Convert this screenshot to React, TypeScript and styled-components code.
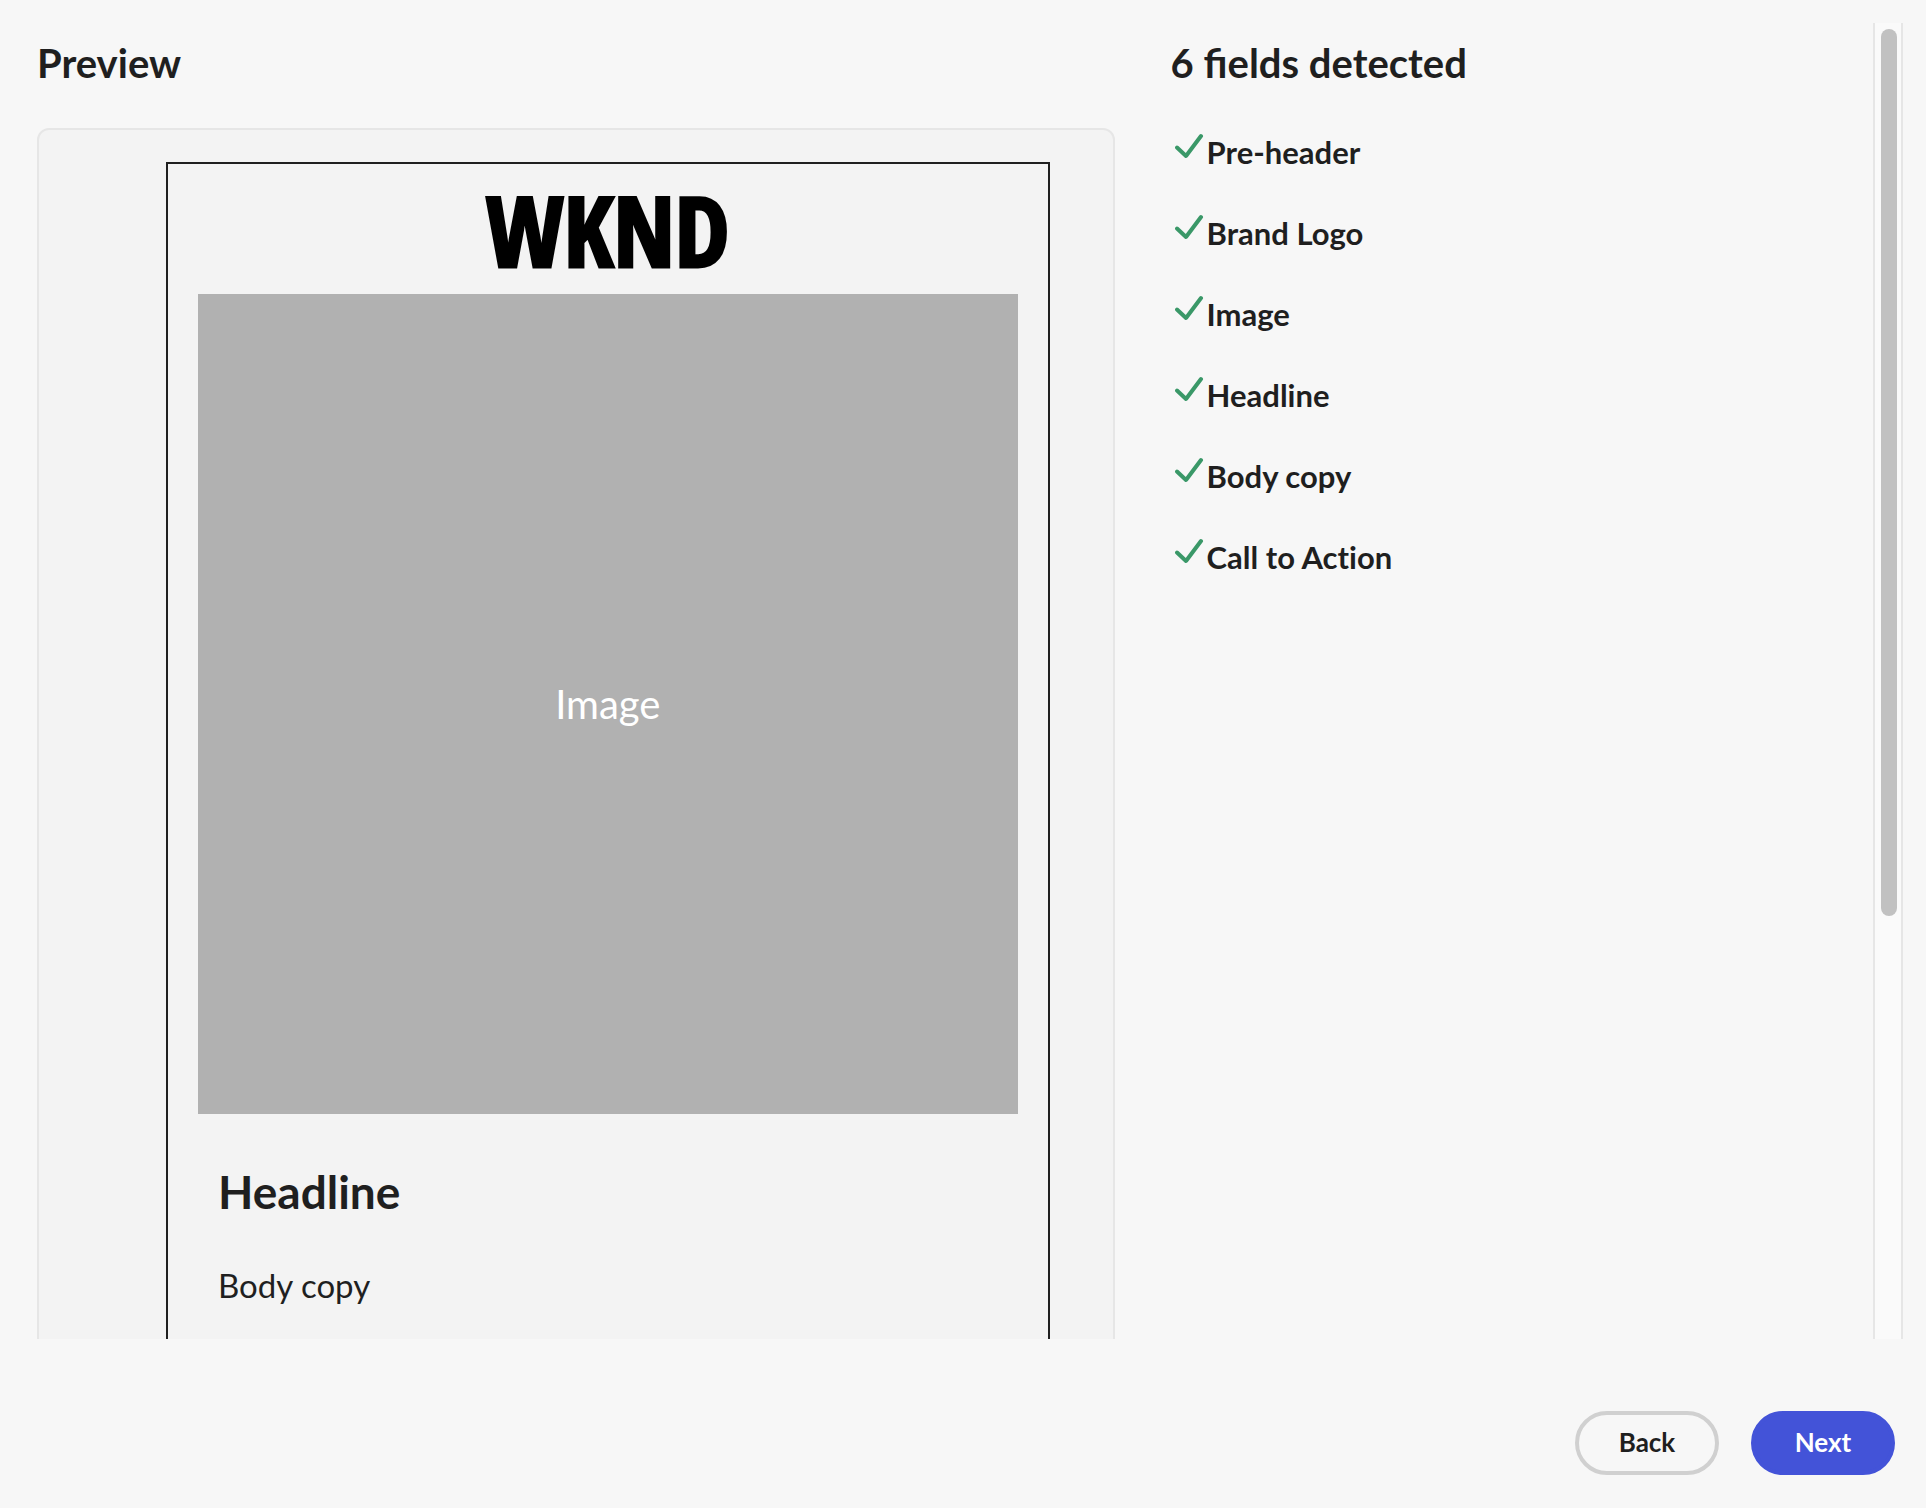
import React from "react";
import styled, { createGlobalStyle } from "styled-components";

const color = {
  page: "#f7f7f7",
  card: "#f3f3f3",
  ink: "#1f1f1f",
  line: "#e6e6e6",
  placeholder: "#b1b1b1",
  positive: "#3a9868",
  accent: "#4353d8",
};

const GlobalStyle = createGlobalStyle`
  *, *::before, *::after { box-sizing: border-box; }
  html, body, #root { height: 100%; }
  body {
    margin: 0;
    background: ${color.page};
    color: ${color.ink};
    font-family: Lato, "Open Sans", sans-serif;
  }
  h1, h2, p, ul { margin: 0; padding: 0; }
`;

const Page = styled.div`
  display: flex;
  flex-direction: column;
  height: 100vh;
  padding-top: 23px;
`;

const ScrollArea = styled.main`
  flex: 1;
  min-height: 0;
  display: flex;
  padding: 0 23px 0 37px;
`;

const Columns = styled.div`
  flex: 1;
  min-width: 0;
  display: grid;
  grid-template-columns: 3fr 2fr;
  column-gap: 40px;
  align-items: start;
  overflow: hidden;
`;

const Column = styled.section<{ $inset?: boolean }>`
  min-width: 0;
  padding-left: ${(p) => (p.$inset ? 16 : 0)}px;
`;

const Title = styled.h1`
  padding: 16px 0 41px;
  font-size: 40px;
  line-height: 48px;
  font-weight: 700;
`;

const Card = styled.div`
  padding: 32px 63px 64px 127px;
  border: 2px solid ${color.line};
  border-radius: 12px;
  background: ${color.card};
`;

const Email = styled.article`
  padding: 0 30px 64px;
  border: 2px solid ${color.ink};
`;

const Logo = styled.div`
  display: flex;
  align-items: center;
  justify-content: center;
  height: 130px;
  color: #000;
  font-family: "Noto Sans ExtraCondensed", "Open Sans Condensed", "Liberation Sans Narrow", "DejaVu Sans Condensed", sans-serif;
  font-size: 98px;
  line-height: 128px;
  font-weight: 900;
  -webkit-text-stroke: 3px #000;
`;

const ImageSlot = styled.div`
  display: flex;
  align-items: center;
  justify-content: center;
  aspect-ratio: 1;
  background: ${color.placeholder};
  color: #fff;
  font-size: 40px;
  line-height: 48px;
`;

const Copy = styled.div`
  padding: 50px 20px 0;
`;

const Headline = styled.h2`
  font-size: 46px;
  line-height: 56px;
  font-weight: 700;
`;

const Body = styled.p`
  padding-top: 45px;
  font-size: 33px;
  line-height: 40px;
`;

const Fields = styled.ul`
  list-style: none;
`;

const Field = styled.li`
  display: flex;
  align-items: flex-start;
  gap: 2px;
  height: 81px;
  padding-left: 4px;
  font-size: 31px;
  line-height: 48px;
  font-weight: 700;
  font-variant-ligatures: none;
`;

const CheckIcon = styled.svg`
  flex: none;
  width: 30px;
  height: 48px;
`;

const Track = styled.div`
  flex: none;
  width: 30px;
  padding: 6px;
  border: solid ${color.line};
  border-width: 0 2px;
  background: #fafafa;
`;

const Thumb = styled.div`
  width: 16px;
  height: 68%;
  border-radius: 8px;
  background: #c1c1c1;
`;

const Footer = styled.footer`
  display: flex;
  justify-content: flex-end;
  gap: 32px;
  padding: 72px 31px 33px;
`;

const Button = styled.button<{ $primary?: boolean }>`
  min-width: 144px;
  height: 64px;
  padding: 0 32px 2px;
  border: 4px solid ${(p) => (p.$primary ? color.accent : "#d0d0d0")};
  border-radius: 32px;
  background: ${(p) => (p.$primary ? color.accent : "transparent")};
  color: ${(p) => (p.$primary ? "#fff" : color.ink)};
  font-family: inherit;
  font-size: 26px;
  line-height: 32px;
  font-weight: 700;
  cursor: pointer;
`;

const fields = ["Pre-header", "Brand Logo", "Image", "Headline", "Body copy", "Call to Action"];

export default function App() {
  return (
    <>
      <GlobalStyle />
      <Page>
        <ScrollArea>
          <Columns>
            <Column>
              <Title>Preview</Title>
              <Card>
                <Email>
                  <Logo>WKND</Logo>
                  <ImageSlot>Image</ImageSlot>
                  <Copy>
                    <Headline>Headline</Headline>
                    <Body>Body copy</Body>
                  </Copy>
                </Email>
              </Card>
            </Column>
            <Column $inset>
              <Title as="h2">{fields.length} fields detected</Title>
              <Fields>
                {fields.map((name) => (
                  <Field key={name}>
                    <CheckIcon viewBox="0 0 30 48" aria-hidden="true">
                      <path
                        d="M2 19.5 L11 28 L26 8"
                        fill="none"
                        stroke={color.positive}
                        strokeWidth="4"
                        strokeLinecap="round"
                        strokeLinejoin="round"
                      />
                    </CheckIcon>
                    {name}
                  </Field>
                ))}
              </Fields>
            </Column>
          </Columns>
          <Track>
            <Thumb />
          </Track>
        </ScrollArea>
        <Footer>
          <Button type="button">Back</Button>
          <Button type="button" $primary>
            Next
          </Button>
        </Footer>
      </Page>
    </>
  );
}
